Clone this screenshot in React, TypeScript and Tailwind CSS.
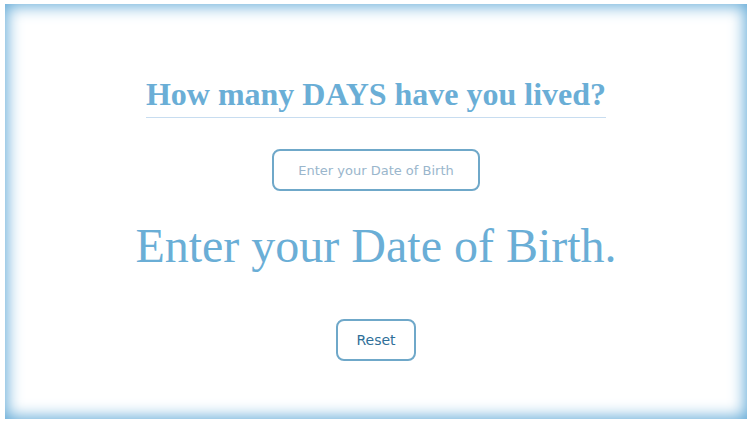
import React from "react";

export default function App() {
  return (
    <div className="w-[751px] h-[423px] bg-white overflow-hidden">
      <div className="ml-[5px] mt-[4px] w-[742px] h-[415px] shadow-[inset_0_0_16px_2px_#5fa8d6] flex flex-col items-center pt-[71px]">
        <h1 className="inline-block text-[#6aaed6] font-bold text-[32px] leading-[38px] pb-[4px] border-b border-[#c8ddf0] font-['Liberation_Serif',serif]">
          How many DAYS have you lived?
        </h1>
        <input
          type="text"
          placeholder="Enter your Date of Birth"
          className="mt-[31px] w-[208px] h-[42px] border-2 border-[#6fa8c9] rounded-[8px] text-center text-[13px] text-[#6a8fb0] placeholder:text-[#9ab6cc] outline-none font-['DejaVu_Sans',sans-serif]"
        />
        <div className="mt-[27px] text-[#6aaed6] text-[48px] leading-[56px] font-['Liberation_Serif',serif]">
          Enter your Date of Birth.
        </div>
        <button className="mt-[45px] w-[80px] h-[42px] border-2 border-[#6fa8c9] rounded-[8px] bg-white text-[#2f6f98] text-[14px] font-['DejaVu_Sans',sans-serif]">
          Reset
        </button>
      </div>
    </div>
  );
}
